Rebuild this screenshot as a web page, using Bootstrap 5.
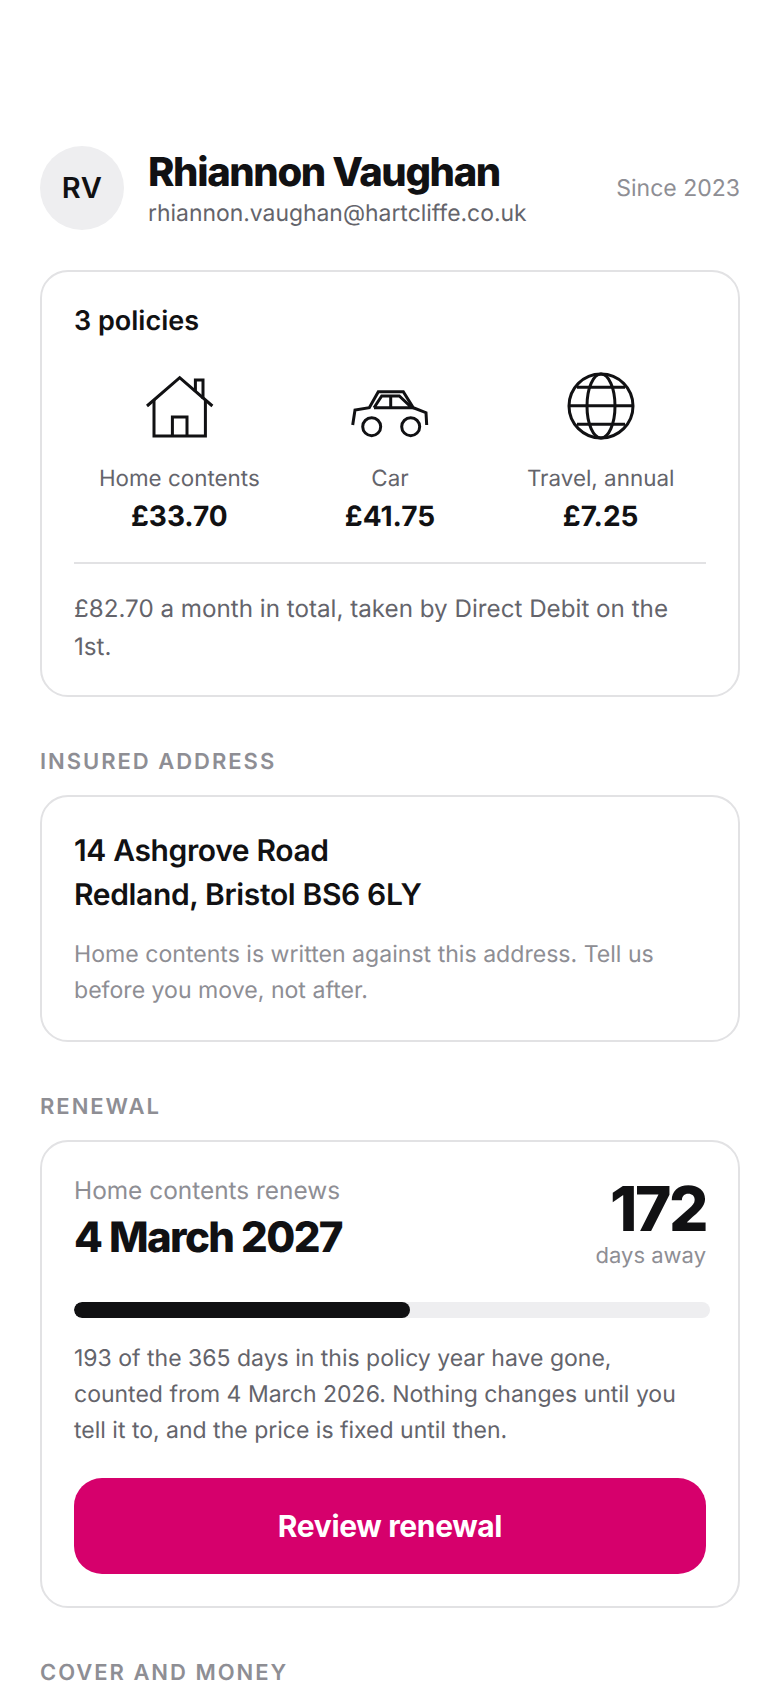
<!DOCTYPE html>
<html lang="en">
<head>
    <meta charset="UTF-8">
    <meta name="viewport" content="width=device-width, initial-scale=1.0">
    <title>Account</title>
    <link rel="stylesheet" href="https://cdn.jsdelivr.net/npm/bootstrap@5.3.0/dist/css/bootstrap.min.css">
    <style>
        html, body {
            height: 1688px;
            overflow: hidden;
        }
        body {
            background: #fff;
            color: #111113;
            font-family: Inter, "Liberation Sans", sans-serif;
            text-rendering: geometricPrecision;
        }
        .page-wrap {
            padding: 146px 40px 0;
        }
        .avatar {
            width: 84px;
            height: 84px;
            background: #eeeef0;
            font-size: 29px;
            font-weight: 600;
            letter-spacing: 0.02em;
        }
        .cust-name {
            margin-top: 2px;
            font-size: 40px;
            line-height: 46px;
            font-weight: 800;
            letter-spacing: -0.034em;
        }
        .cust-email {
            margin-top: 2px;
            font-size: 22.900px;
            line-height: 32px;
            color: #64646b;
        }
        .since {
            font-size: 23px;
            color: #8e8e94;
        }
        .box {
            border: 2px solid #e2e2e4;
            border-radius: 28px;
            padding: 32px;
        }
        .box-gap {
            margin-top: 40px;
            padding-bottom: 30px;
        }
        .box-title {
            font-size: 27px;
            line-height: 34px;
            font-weight: 600;
        }
        .policy-row {
            margin-top: 32px;
        }
        .policy-icon {
            width: 80px;
            height: 72px;
        }
        .policy-icon * {
            fill: none;
            stroke: #111113;
            stroke-width: 3;
        }
        .policy-name {
            margin-top: 21px;
            font-size: 22.400px;
            line-height: 32px;
            color: #64646b;
        }
        .policy-price {
            margin-top: 3px;
            font-size: 28px;
            line-height: 36px;
            font-weight: 700;
        }
        .rule {
            margin-top: 28px;
            padding-top: 26px;
            border-top: 2px solid #e2e2e4;
        }
        .note-text {
            font-size: 24.200px;
            line-height: 37.500px;
            color: #64646b;
        }
        .body-text {
            margin-top: 23px;
            font-size: 23px;
            line-height: 35.650px;
            color: #64646b;
        }
        .muted-text {
            margin-top: 20px;
            font-size: 23.100px;
            line-height: 35.650px;
            color: #8e8e94;
        }
        .sect-label {
            margin-top: 51px;
            margin-bottom: 19px;
            font-size: 22px;
            line-height: 28px;
            font-weight: 600;
            letter-spacing: 0.09em;
            color: #8e8e94;
        }
        .addr {
            font-size: 30px;
            line-height: 44px;
            font-weight: 600;
            letter-spacing: -0.012em;
        }
        .renews {
            font-size: 24.400px;
            line-height: 32px;
            color: #8e8e94;
        }
        .renew-date {
            margin-top: 5px;
            font-size: 42px;
            line-height: 54px;
            font-weight: 800;
            letter-spacing: -0.038em;
        }
        .days-num {
            margin-top: 4px;
            font-size: 62px;
            line-height: 62px;
            font-weight: 800;
            letter-spacing: -0.04em;
        }
        .days-label {
            font-size: 22px;
            line-height: 32px;
            color: #8e8e94;
        }
        .year-track {
            margin-top: 30px;
            width: calc(100% + 4px);
            height: 16px;
            background: #eeeef0;
            border-radius: 8px;
        }
        .year-fill {
            background: #111113;
            border-radius: 8px;
        }
        .btn-review {
            margin-top: 30px;
            height: 96px;
            background: #d6006c;
            border: 0;
            border-radius: 28px;
            color: #fff;
            font-size: 30px;
            font-weight: 700;
            letter-spacing: -0.012em;
        }
    </style>
</head>
<body>
    <div class="page-wrap">
        <div class="d-flex align-items-center">
            <div class="avatar rounded-circle d-flex align-items-center justify-content-center flex-shrink-0">RV</div>
            <div class="flex-grow-1 ms-4">
                <div class="cust-name">Rhiannon Vaughan</div>
                <div class="cust-email">rhiannon.vaughan@hartcliffe.co.uk</div>
            </div>
            <div class="since">Since 2023</div>
        </div>

        <div class="box box-gap">
            <div class="box-title">3 policies</div>
            <div class="row g-0 text-center policy-row">
                <div class="col-4">
                    <svg class="policy-icon" viewBox="0 0 80 72">
                        <path d="M8 36 40.700 7.700 73.400 36"/>
                        <path d="M15 30V66H66.400V30"/>
                        <path d="M33.400 66V47H48V66"/>
                        <path d="M56.400 22V10H64V29"/>
                    </svg>
                    <div class="policy-name">Home contents</div>
                    <div class="policy-price">£33.70</div>
                </div>
                <div class="col-4">
                    <svg class="policy-icon" viewBox="0 0 80 72">
                        <path d="M2.700 55 5 40 19.300 37.700 28.300 21.700H53.300L63.300 37.700 76 42.700 76.700 55"/>
                        <path d="M24 37.700H61.700L49.300 26H31.700L24 37.700"/>
                        <path d="M40.700 26V37.700"/>
                        <circle cx="21.700" cy="56.700" r="9"/>
                        <circle cx="60.700" cy="56.700" r="9"/>
                    </svg>
                    <div class="policy-name">Car</div>
                    <div class="policy-price">£41.75</div>
                </div>
                <div class="col-4">
                    <svg class="policy-icon" viewBox="0 0 80 72">
                        <circle cx="40" cy="36" r="32"/>
                        <ellipse cx="40" cy="36" rx="14" ry="32"/>
                        <path d="M16 17.300H64M8 35.700H72M16 54.300H64"/>
                    </svg>
                    <div class="policy-name">Travel, annual</div>
                    <div class="policy-price">£7.25</div>
                </div>
            </div>
            <div class="rule">
                <div class="note-text">£82.70 a month in total, taken by Direct Debit on the 1st.</div>
            </div>
        </div>

        <div class="sect-label">INSURED ADDRESS</div>
        <div class="box">
            <div class="addr">14 Ashgrove Road<br>Redland, Bristol BS6 6LY</div>
            <div class="muted-text">Home contents is written against this address. Tell us before you move, not after.</div>
        </div>

        <div class="sect-label">RENEWAL</div>
        <div class="box">
            <div class="d-flex justify-content-between">
                <div>
                    <div class="renews">Home contents renews</div>
                    <div class="renew-date">4 March 2027</div>
                </div>
                <div class="text-end">
                    <div class="days-num">172</div>
                    <div class="days-label">days away</div>
                </div>
            </div>
            <div class="progress year-track">
                <div class="progress-bar year-fill" style="width: 52.9%"></div>
            </div>
            <div class="body-text">193 of the 365 days in this policy year have gone, counted from 4 March 2026. Nothing changes until you tell it to, and the price is fixed until then.</div>
            <button class="btn btn-review w-100">Review renewal</button>
        </div>

        <div class="sect-label">COVER AND MONEY</div>
    </div>
</body>
</html>
